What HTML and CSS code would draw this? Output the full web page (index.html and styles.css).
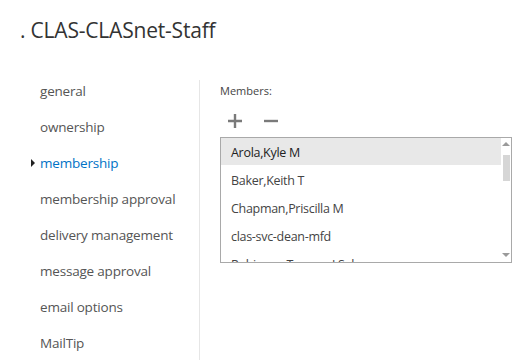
FILE: index.html
```html
<!DOCTYPE html>
<html lang="en">
<head>
  <meta charset="UTF-8">
  <title>CLAS-CLASnet-Staff</title>
  <link rel="stylesheet" href="styles.css">
</head>
<body>
  <h1 class="title">. CLAS-CLASnet-Staff</h1>

  <div class="page">
    <ul class="nav">
      <li>general</li>
      <li>ownership</li>
      <li class="active">membership</li>
      <li>membership approval</li>
      <li>delivery management</li>
      <li>message approval</li>
      <li>email options</li>
      <li>MailTip</li>
    </ul>

    <div class="content">
      <div class="label">Members:</div>

      <div class="tools">
        <button class="tool" title="add">
          <svg width="16" height="16" viewBox="0 0 16 16"><path d="M8 1v14M1 8h14" stroke="#7a7a7a" stroke-width="2.4" fill="none"/></svg>
        </button>
        <button class="tool" title="remove">
          <svg width="16" height="16" viewBox="0 0 16 16"><path d="M1 8h14" stroke="#7a7a7a" stroke-width="2.4" fill="none"/></svg>
        </button>
      </div>

      <div class="listbox">
        <ul class="members">
          <li class="selected">Arola,Kyle M</li>
          <li>Baker,Keith T</li>
          <li>Chapman,Priscilla M</li>
          <li>clas-svc-dean-mfd</li>
          <li>Robinson,Tamara J Sabo</li>
        </ul>
        <div class="scrollbar">
          <span class="arrow up"></span>
          <span class="thumb"></span>
          <span class="track"></span>
          <span class="arrow down"></span>
        </div>
      </div>
    </div>
  </div>
</body>
</html>
```

FILE: styles.css
```css
body {
  margin: 0;
  font-family: "Open Sans", "Noto Sans", sans-serif;
  color: #333;
  background: #fff;
}

.title {
  margin: 0;
  padding: 15px 0 0 20px;
  height: 59px;
  box-sizing: border-box;
  font-size: 21px;
  line-height: 30px;
  font-weight: normal;
  color: #333;
  letter-spacing: -0.2px;
}

.page {
  display: flex;
}

.nav {
  list-style: none;
  margin: 21px 0 0 0;
  padding: 0;
  width: 200px;
  box-sizing: border-box;
  border-right: 1px solid #e6e6e6;
  height: 280px;
}

.nav li {
  padding-left: 40px;
  height: 36px;
  line-height: 36px;
  font-size: 13.5px;
  color: #555;
  letter-spacing: -0.2px;
}

.nav li:first-child {
  margin-top: -7px;
}

.nav li.active {
  color: #0072c6;
}

.nav li.active::before {
  content: "";
  display: inline-block;
  width: 0;
  height: 0;
  margin-left: -9px;
  margin-right: 5px;
  border-top: 4px solid transparent;
  border-bottom: 4px solid transparent;
  border-left: 4px solid #222;
  vertical-align: 1px;
}

.content {
  padding: 22px 0 0 20px;
  width: 292px;
}

.label {
  font-size: 11px;
  color: #444;
  height: 20px;
  line-height: 20px;
}

.tools {
  display: flex;
  gap: 20px;
  padding: 12px 0 0 7px;
  height: 36px;
  box-sizing: border-box;
}

.tool {
  border: none;
  background: none;
  padding: 0;
  width: 16px;
  height: 16px;
  cursor: pointer;
}

.listbox {
  display: flex;
  width: 292px;
  height: 126px;
  box-sizing: border-box;
  border: 1px solid #a9a9a9;
  overflow: hidden;
}

.members {
  list-style: none;
  margin: 0;
  padding: 0;
  flex: 1;
}

.members li {
  height: 28px;
  line-height: 29px;
  padding-left: 10px;
  font-size: 12.5px;
  color: #444;
  letter-spacing: -0.3px;
}

.members li.selected {
  height: 27px;
  margin-bottom: 1px;
  background: #e8e8e8;
  color: #222;
}

.scrollbar {
  width: 10px;
  display: flex;
  flex-direction: column;
  align-items: center;
}

.arrow {
  width: 0;
  height: 0;
  border-left: 4px solid transparent;
  border-right: 4px solid transparent;
}

.arrow.up {
  margin-top: 4px;
  border-bottom: 4px solid #9a9a9a;
}

.arrow.down {
  margin-bottom: 5px;
  border-top: 4px solid #9a9a9a;
}

.thumb {
  margin-top: 9px;
  width: 7px;
  height: 26px;
  background: #d6d6d6;
}

.track {
  flex: 1;
}
```
